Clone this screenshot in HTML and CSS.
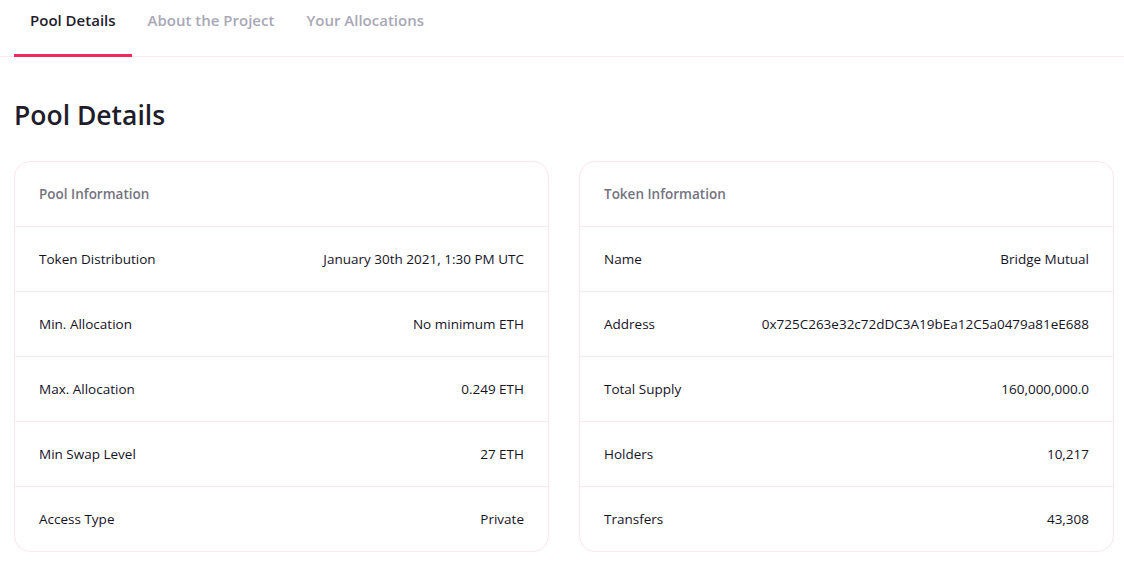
FILE: index.html
```html
<!DOCTYPE html>
<html>
<head>
<meta charset="utf-8">
<link rel="stylesheet" href="styles.css">
</head>
<body>
<nav class="tabs">
  <div class="tab active">Pool Details</div>
  <div class="tab">About the Project</div>
  <div class="tab">Your Allocations</div>
</nav>
<main class="content">
  <h1 class="title">Pool Details</h1>
  <div class="cards">
    <section class="card">
      <div class="card-head">Pool Information</div>
      <div class="row"><span class="label">Token Distribution</span><span class="value">January 30th 2021, 1:30 PM UTC</span></div>
      <div class="row"><span class="label">Min. Allocation</span><span class="value">No minimum ETH</span></div>
      <div class="row"><span class="label">Max. Allocation</span><span class="value">0.249 ETH</span></div>
      <div class="row"><span class="label">Min Swap Level</span><span class="value">27 ETH</span></div>
      <div class="row"><span class="label">Access Type</span><span class="value">Private</span></div>
    </section>
    <section class="card">
      <div class="card-head">Token Information</div>
      <div class="row"><span class="label">Name</span><span class="value">Bridge Mutual</span></div>
      <div class="row"><span class="label">Address</span><span class="value">0x725C263e32c72dDC3A19bEa12C5a0479a81eE688</span></div>
      <div class="row"><span class="label">Total Supply</span><span class="value">160,000,000.0</span></div>
      <div class="row"><span class="label">Holders</span><span class="value">10,217</span></div>
      <div class="row"><span class="label">Transfers</span><span class="value">43,308</span></div>
    </section>
  </div>
</main>
</body>
</html>
```

FILE: styles.css
```css
* { box-sizing: border-box; }
body {
  margin: 0;
  background: #fff;
  font-family: "Open Sans", "Noto Sans", sans-serif;
  color: #1f1d2b;
}
.tabs {
  display: flex;
  padding: 0 0 0 14px;
  border-bottom: 1px solid #fde6ee;
  height: 57px;
}
.tab {
  padding: 0 16px;
  font-size: 15px;
  font-weight: 600;
  color: #a9a8b6;
  line-height: 40px;
  height: 56px;
  border-bottom: 3px solid transparent;
}
.tab.active {
  color: #1f1d2b;
  border-bottom-color: #f2295f;
  height: 57px;
}
.content {
  padding: 0 10px 0 14px;
}
.title {
  margin: 0;
  padding-top: 40px;
  height: 104px;
  font-size: 26.5px;
  font-weight: 600;
  line-height: 36px;
  color: #1f1d2b;
}
.cards {
  display: grid;
  grid-template-columns: 1fr 1fr;
  gap: 30px;
}
.card {
  border: 1px solid #fde6ee;
  border-radius: 16px;
}
.card-head {
  height: 64px;
  padding: 0 24px;
  display: flex;
  align-items: center;
  font-size: 13.5px;
  font-weight: 600;
  color: #74737f;
}
.row {
  height: 65px;
  border-top: 1px solid #fde6ee;
  padding: 0 24px;
  display: flex;
  align-items: center;
  justify-content: space-between;
  font-size: 13.5px;
  font-weight: 500;
  color: #15131f;
}
```
